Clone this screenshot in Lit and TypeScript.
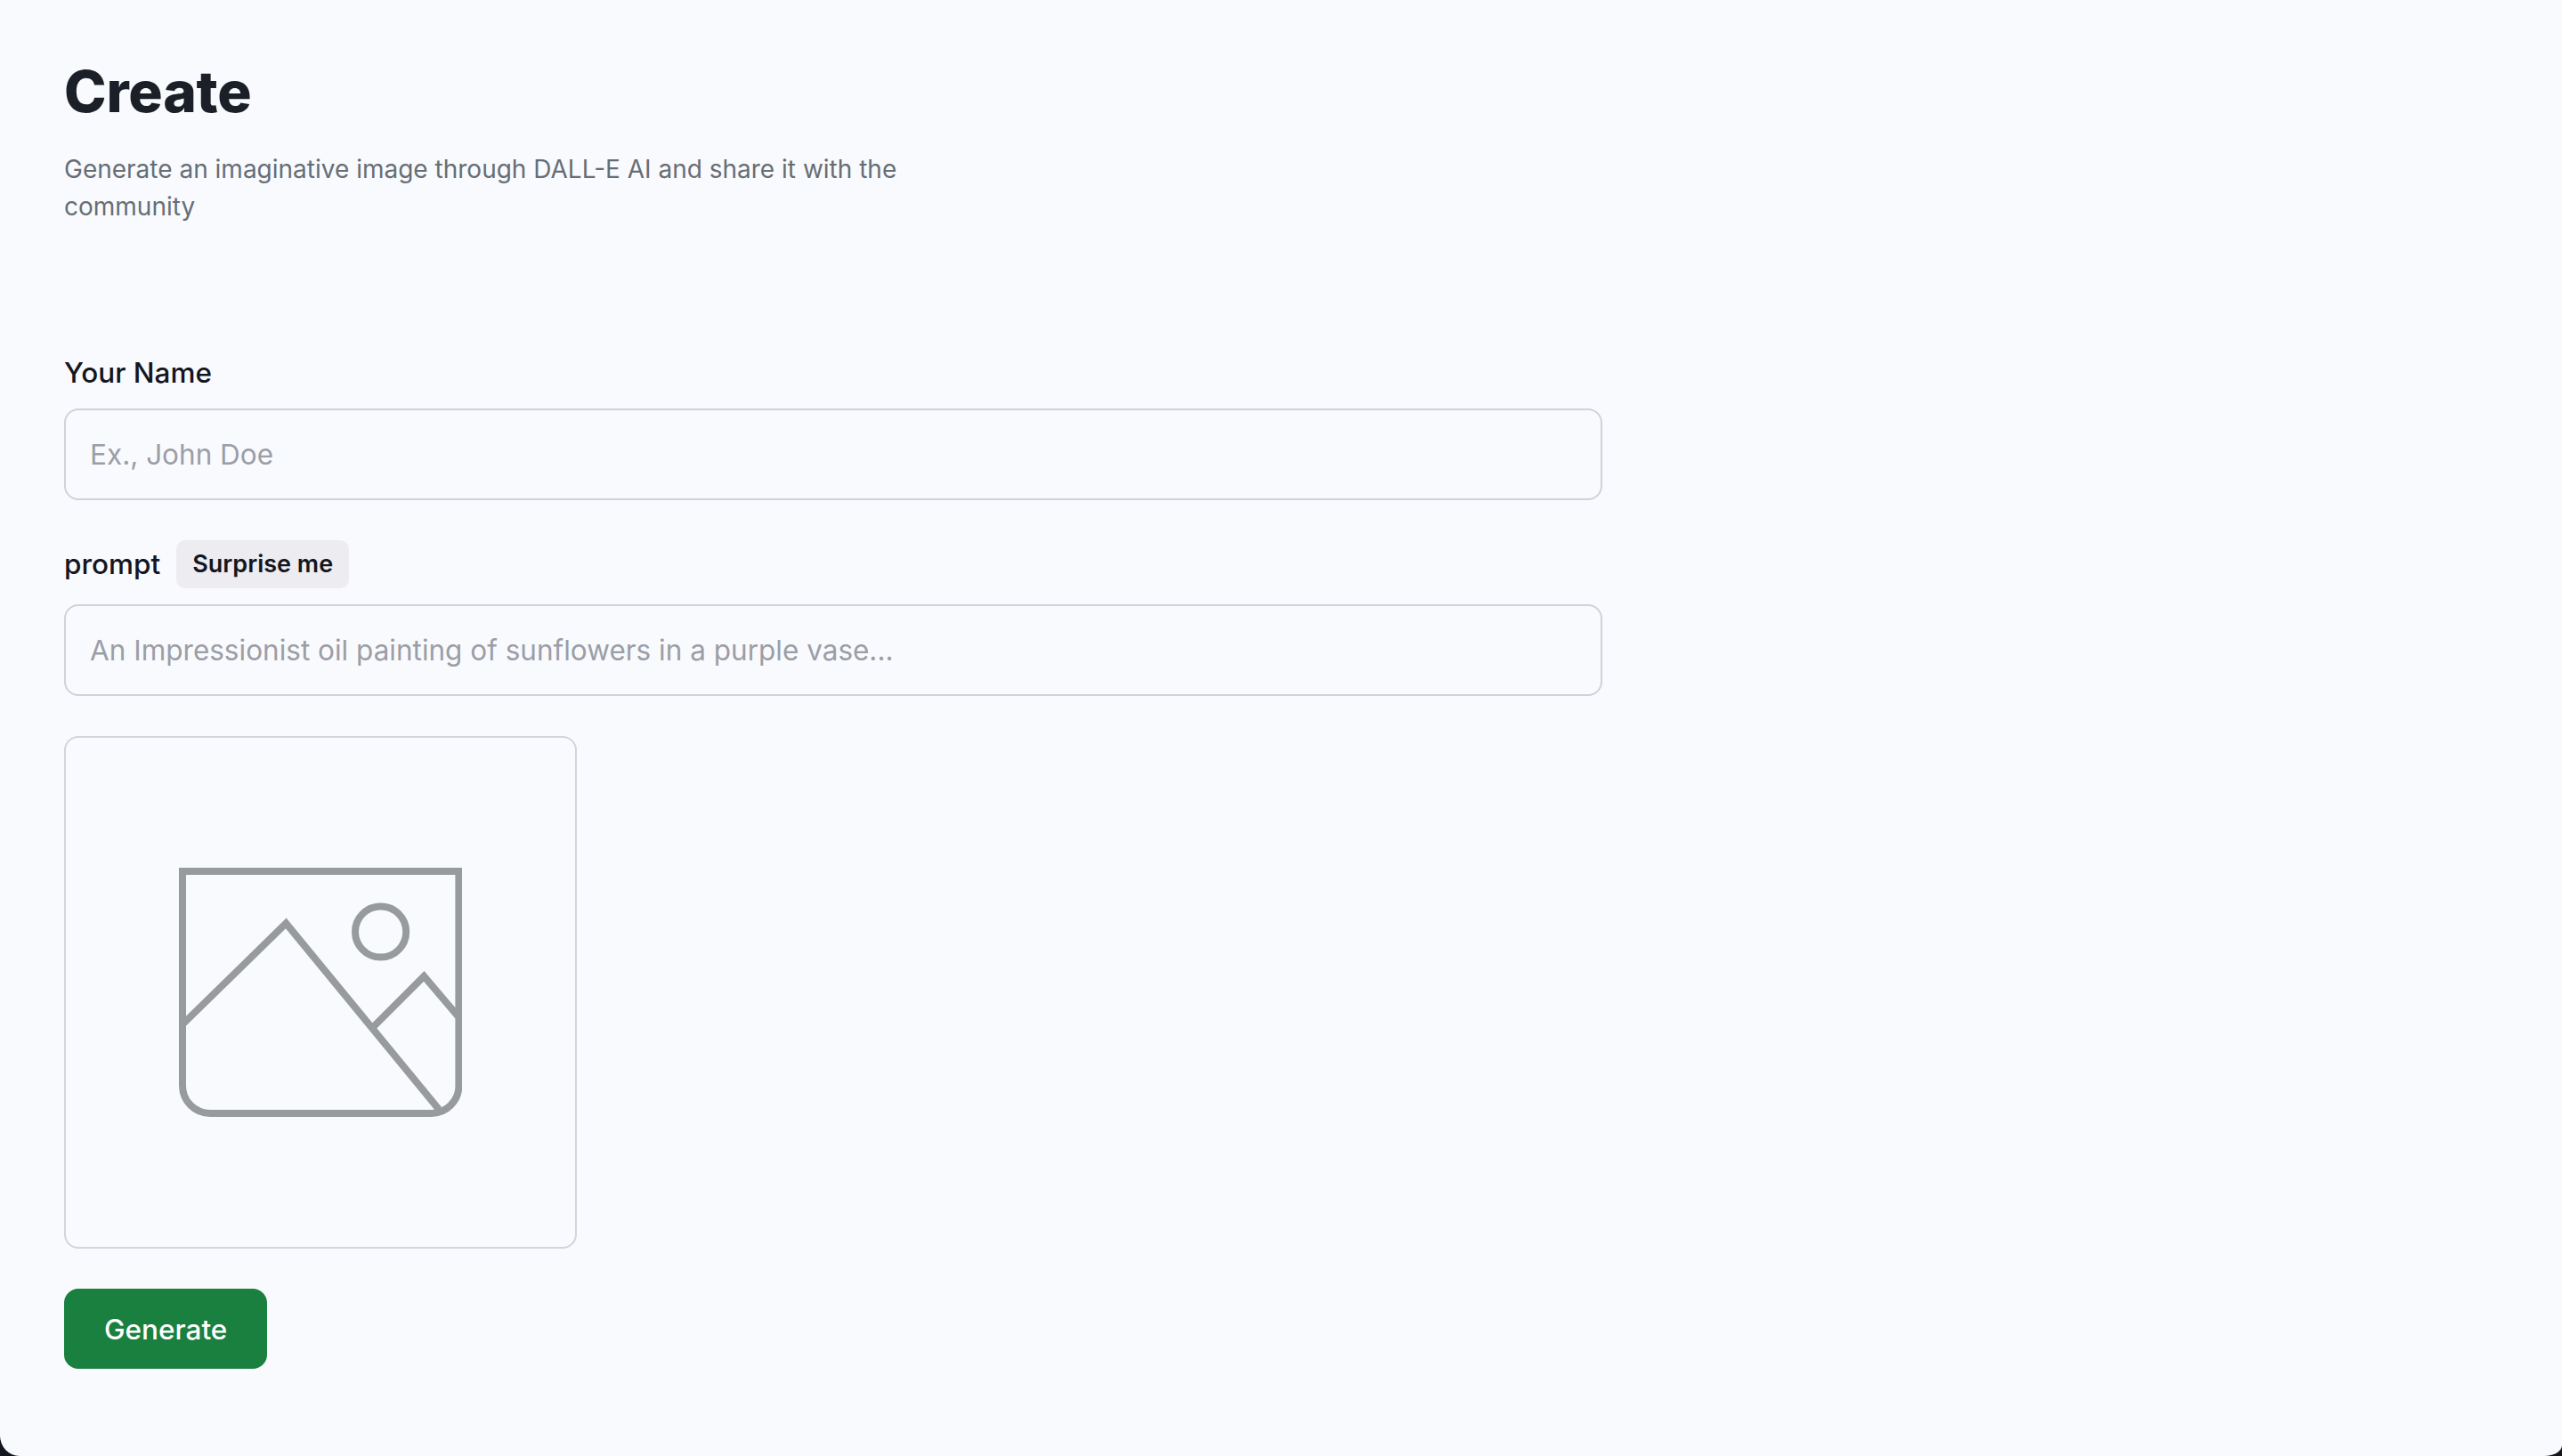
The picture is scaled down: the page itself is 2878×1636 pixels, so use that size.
import { LitElement, css, html } from 'lit';
import { customElement } from 'lit/decorators.js';

@customElement('app-root')
export class AppRoot extends LitElement {
  static styles = css`
    :host {
      background: #14161f;
      display: block;
      font-family: Inter, 'Noto Sans', sans-serif;
      height: 1636px;
      overflow: hidden;
      width: 100%;
    }

    .page {
      background: #f9fafe;
      border-radius: 0 0 20px 22px / 0 0 12px 23px;
      box-sizing: border-box;
      height: 100%;
      padding: 66px 72px 0;
    }

    h1 {
      color: #1b1f27;
      font-size: 64px;
      font-weight: 800;
      letter-spacing: -0.2px;
      line-height: 74px;
      margin: 0;
    }

    .sub {
      color: #666e75;
      font-size: 28px;
      line-height: 42px;
      margin: 29px 0 0;
      max-width: 1000px;
    }

    form {
      display: flex;
      flex-direction: column;
      gap: 45px;
      margin-top: 144px;
      max-width: 1728px;
    }

    .field {
      display: flex;
      flex-direction: column;
      gap: 18px;
    }

    .label-row {
      align-items: center;
      display: flex;
      gap: 18px;
    }

    label {
      color: #14161f;
      font-size: 31.5px;
      font-weight: 500;
      line-height: 44px;
    }

    .surprise {
      background: #ececf1;
      border: none;
      border-radius: 10px;
      color: #14161f;
      font: 600 27px/54px Inter, sans-serif;
      height: 54px;
      padding: 0 18px;
    }

    input {
      background: transparent;
      border: 2px solid #d0d1d9;
      border-radius: 16px;
      box-sizing: border-box;
      color: #14161f;
      font: 400 31.5px Inter, sans-serif;
      height: 103px;
      outline: none;
      padding: 0 27px;
      width: 100%;
    }

    input::placeholder {
      color: #9b9ea6;
      opacity: 1;
    }

    .preview {
      align-items: center;
      border: 2px solid #d3d4dc;
      border-radius: 16px;
      box-sizing: border-box;
      display: flex;
      height: 576px;
      justify-content: center;
      width: 576px;
    }

    .preview svg {
      display: block;
      height: 318px;
      width: 318px;
    }

    .generate {
      align-self: flex-start;
      background: #198040;
      border: none;
      border-radius: 16px;
      color: #fff;
      font: 500 31.5px Inter, sans-serif;
      height: 90px;
      padding: 0 45px;
    }
  `;

  render() {
    return html`
      <div class="page">
        <h1>Create</h1>
        <p class="sub">Generate an imaginative image through DALL-E AI and share it with the community</p>
        <form>
          <div class="field">
            <label for="name">Your Name</label>
            <input id="name" type="text" placeholder="Ex., John Doe" />
          </div>
          <div class="field">
            <div class="label-row">
              <label for="prompt">prompt</label>
              <button class="surprise" type="button">Surprise me</button>
            </div>
            <input id="prompt" type="text" placeholder="An Impressionist oil painting of sunflowers in a purple vase..." />
          </div>
          <div class="preview">
            <svg viewBox="0 0 318 318" fill="none" stroke="#989b9e" stroke-width="8">
              <path d="M4 23H314.4V264a31 31 0 0 1-31 31H35a31 31 0 0 1-31-31Z" />
              <path d="M1 198L120.3 81.5L292 290.5" />
              <path d="M218.7 197.5L275.3 141L317 190" />
              <circle cx="226.6" cy="91" r="28.6" />
            </svg>
          </div>
          <button class="generate" type="button">Generate</button>
        </form>
      </div>
    `;
  }
}
